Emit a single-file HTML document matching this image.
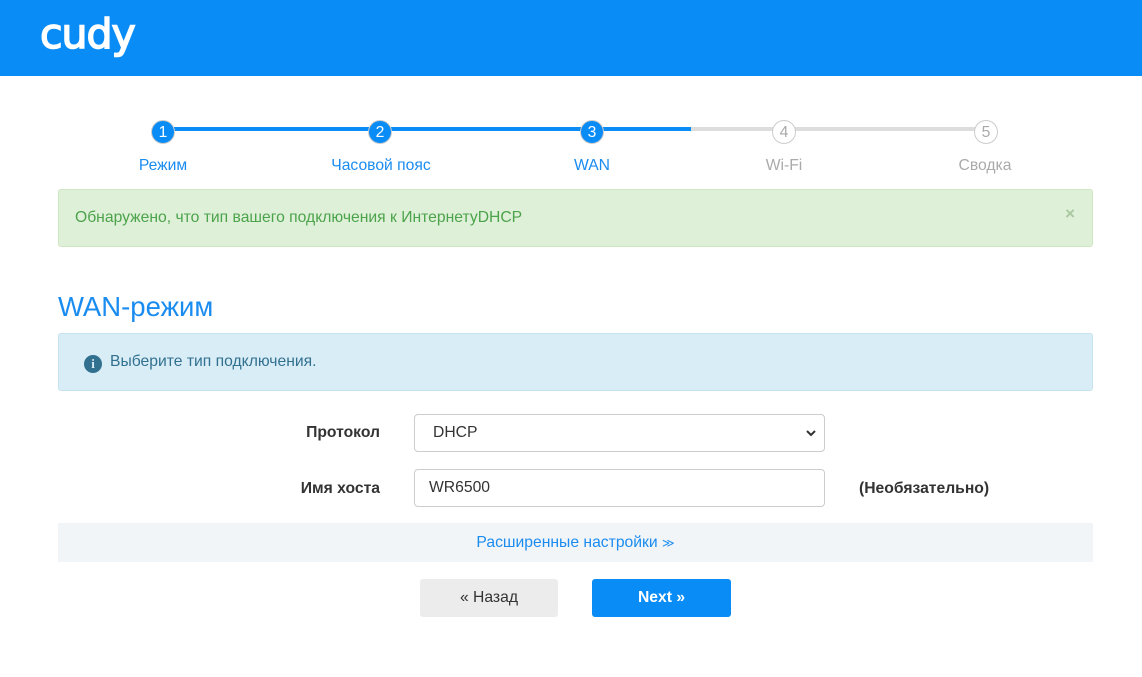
<!DOCTYPE html>
<html><head><meta charset="utf-8"><style>
*{box-sizing:border-box;margin:0;padding:0}
body{width:1142px;height:677px;background:#fff;font-family:"Liberation Sans",Arial,sans-serif;font-size:15.7px;color:#333;position:relative;overflow:hidden}
.hdr{position:absolute;left:0;top:0;width:1142px;height:76px;background:#0a8cf6}
.logo{position:absolute;left:40px;top:10px;color:#fff;font-size:41px;font-weight:normal;-webkit-text-stroke:1.5px #fff;font-family:"DejaVu Sans","Liberation Sans",sans-serif;letter-spacing:-1px}
.line{position:absolute;top:127px;height:4px}
.c{position:absolute;width:24px;height:24px;border-radius:50%;top:120px;text-align:center;line-height:24px;font-size:15.7px}
.c.a{background:#0a8cf6;color:#fff;border:1px solid #ccc}
.c.i{background:#fff;color:#aaa;border:1px solid #ccc}
.lb{position:absolute;top:157px;transform:translateX(-50%);white-space:nowrap}
.abs{position:absolute}
</style></head><body>
<div class="hdr"><div class="logo">cudy</div></div>
<div class="line" style="left:163px;width:528px;background:#0a8cf6"></div>
<div class="line" style="left:691px;width:295px;background:#ddd"></div>
<div class="c a" style="left:151px">1</div>
<div class="c a" style="left:368px">2</div>
<div class="c a" style="left:580px">3</div>
<div class="c i" style="left:772px">4</div>
<div class="c i" style="left:974px">5</div>
<div class="lb" style="left:163px;color:#1a8cf0">Режим</div>
<div class="lb" style="left:381px;color:#1a8cf0">Часовой пояс</div>
<div class="lb" style="left:592px;color:#1a8cf0">WAN</div>
<div class="lb" style="left:784px;color:#aaa">Wi-Fi</div>
<div class="lb" style="left:985px;color:#aaa">Сводка</div>
<div class="abs" style="left:58px;top:189px;width:1035px;height:58px;background:#dff0d8;border:1px solid #cfe6c2;border-radius:3px;color:#4ba34b;padding:19px 16px">Обнаружено, что тип вашего подключения к ИнтернетуDHCP
<span style="position:absolute;right:17px;top:14px;color:#a9c8a0;font-weight:bold;font-size:17px">×</span></div>
<div class="abs" style="left:58px;top:291px;font-size:27.5px;color:#1a8cf0">WAN-режим</div>
<div class="abs" style="left:58px;top:333px;width:1035px;height:58px;background:#d9edf7;border:1px solid #c4e3ef;border-radius:3px;color:#31708f;padding:19px 0 0 25px">
<span style="display:inline-block;width:18px;height:18px;border-radius:50%;background:#31708f;color:#d9edf7;font-weight:bold;font-size:13px;text-align:center;line-height:18px;font-family:'Liberation Serif',serif;vertical-align:-2px;margin-right:8px">i</span>Выберите тип подключения.</div>
<div class="abs" style="left:260px;width:120px;top:424px;text-align:right;font-weight:bold">Протокол</div>
<div class="abs" style="left:414px;top:414px;width:411px;height:38px;border:1px solid #ccc;border-radius:4px;padding:9px 18px">DHCP
<svg style="position:absolute;right:8px;top:15px" width="10" height="7" viewBox="0 0 10 7"><path d="M1 1l4 4 4-4" stroke="#333" stroke-width="2" fill="none"/></svg></div>
<div class="abs" style="left:260px;width:120px;top:480px;text-align:right;font-weight:bold">Имя хоста</div>
<div class="abs" style="left:414px;top:469px;width:411px;height:38px;border:1px solid #ccc;border-radius:4px;padding:9px 14px">WR6500</div>
<div class="abs" style="left:859px;top:480px;font-weight:bold">(Необязательно)</div>
<div class="abs" style="left:58px;top:523px;width:1035px;height:39px;background:#f2f5f8;text-align:center;padding-top:11px;color:#1a8cf0">Расширенные настройки <span style="font-size:12px">≫</span></div>
<div class="abs" style="left:420px;top:579px;width:138px;height:38px;background:#ececec;border-radius:3px;text-align:center;line-height:38px">« Назад</div>
<div class="abs" style="left:592px;top:579px;width:139px;height:38px;background:#0a8cf6;border-radius:3px;text-align:center;line-height:38px;color:#fff;font-weight:bold">Next »</div>
</body></html>
